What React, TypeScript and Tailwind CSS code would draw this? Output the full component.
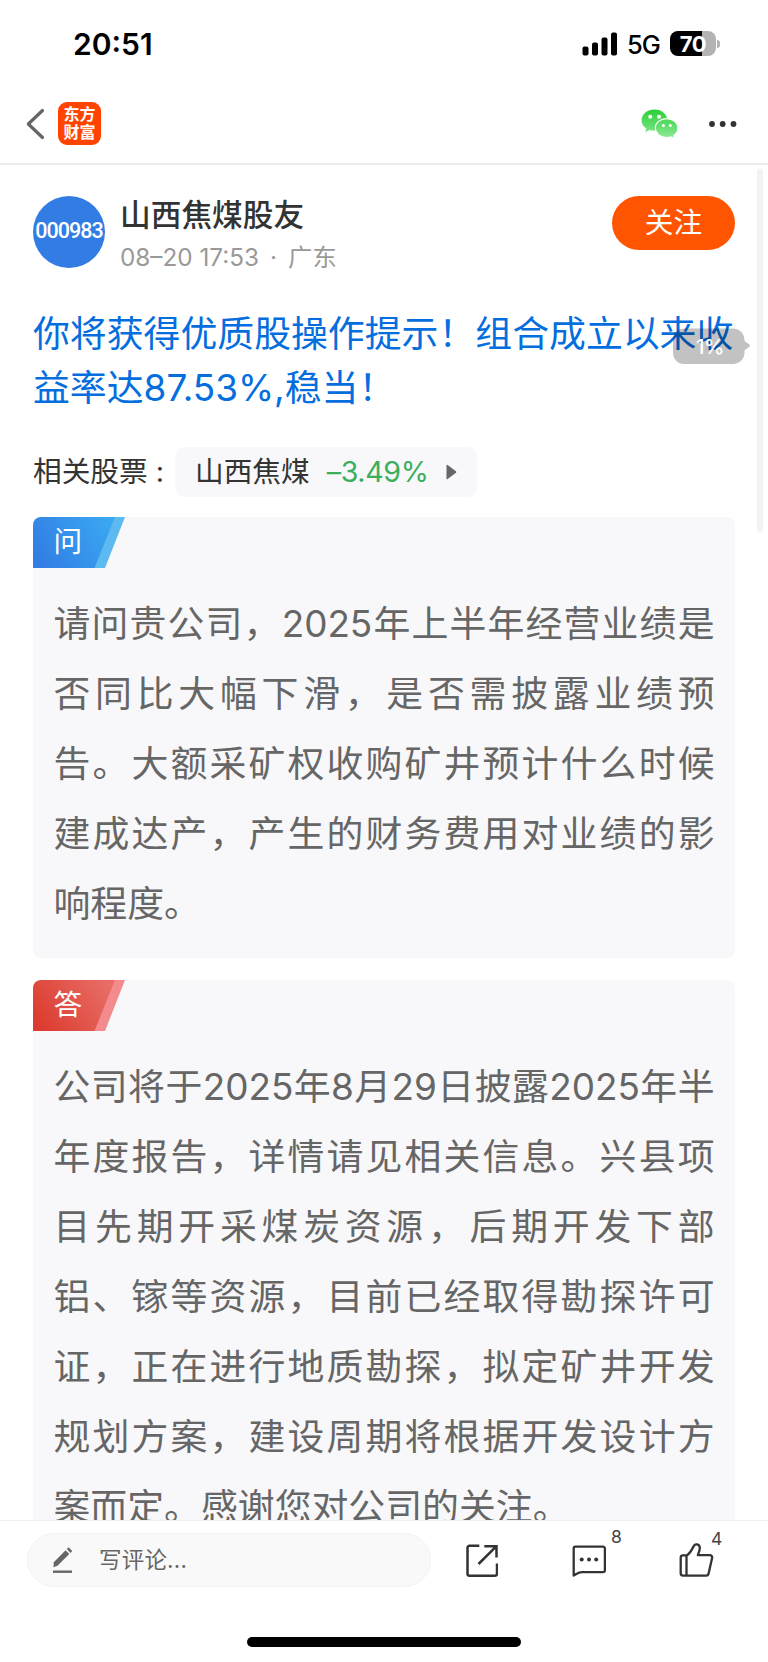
import React from 'react';

interface TextPanelProps {
  label: string;
  kind: 'question' | 'answer';
  lines: string[];
}

const QUESTION_LINES = [
  '请问贵公司，2025年上半年经营业绩是',
  '否同比大幅下滑，是否需披露业绩预',
  '告。大额采矿权收购矿井预计什么时候',
  '建成达产，产生的财务费用对业绩的影',
  '响程度。',
];

const ANSWER_LINES = [
  '公司将于2025年8月29日披露2025年半',
  '年度报告，详情请见相关信息。兴县项',
  '目先期开采煤炭资源，后期开发下部',
  '铝、镓等资源，目前已经取得勘探许可',
  '证，正在进行地质勘探，拟定矿井开发',
  '规划方案，建设周期将根据开发设计方',
  '案而定。感谢您对公司的关注。',
];

const StatusBar = () => (
  <div className="flex h-[84px] shrink-0 items-center justify-between pl-[73px] pr-[48px] pt-[3px]">
    <span className="text-[30px] font-semibold leading-none text-black">20:51</span>
    <div className="flex items-center">
      <svg width="36" height="24" viewBox="0 0 36 24" fill="#000">
        <rect x="0.5" y="14.5" width="6" height="9" rx="2" />
        <rect x="10" y="10.5" width="6" height="13" rx="2" />
        <rect x="19.5" y="5.5" width="6" height="18" rx="2" />
        <rect x="29" y="0.5" width="6" height="23" rx="2" />
      </svg>
      <span className="ml-[9px] w-[33px] pt-[2px] text-[25.5px] font-[450] leading-none tracking-[-1px] text-black">5G</span>
      <div className="ml-[10px] flex items-center">
        <div className="flex h-[25px] w-[46px] items-center justify-center rounded-[8px] bg-[linear-gradient(90deg,#000_70%,#b3b3b3_70%)]">
          <span className="text-[22px] font-bold leading-none tracking-[-0.5px] text-white">70</span>
        </div>
        <div className="ml-px h-[8px] w-[3px] rounded-r-full bg-[#b3b3b3]" />
      </div>
    </div>
  </div>
);

const Header = () => (
  <header className="flex h-[81px] shrink-0 items-center border-b-2 border-[#ebebeb] pl-[26px] pr-[31px]">
    <svg width="19" height="32" viewBox="0 0 19 32" fill="none" stroke="#666" strokeWidth="3.2" strokeLinecap="round" strokeLinejoin="round">
      <path d="M16.5 2.5 2.3 16l14.2 13.5" />
    </svg>
    <div className="ml-[13px] flex h-[43px] w-[43px] flex-col items-center justify-center rounded-[9px] bg-[#ff4400] text-[16px] font-bold leading-[17.5px] text-white">
      <span>东方</span>
      <span>财富</span>
    </div>
    <svg className="ml-auto" width="38" height="30" viewBox="0 0 38 30">
      <defs>
        <linearGradient id="wechat" x1="0" y1="0" x2="0" y2="30" gradientUnits="userSpaceOnUse">
          <stop offset="0" stopColor="#28cf36" />
          <stop offset="1" stopColor="#91ea99" />
        </linearGradient>
      </defs>
      <path fill="url(#wechat)" d="M13.5.6C6.300.6.6 5.300.6 11.300c0 3.400 1.800 6.300 4.700 8.300L4.200 23.200l4.300-2.200c1.600.5 3.300.8 5 .8 7.200 0 12.900-4.800 12.900-10.600S20.700.6 13.500.6Z" />
      <path fill="url(#wechat)" stroke="#fff" strokeWidth="1.1" d="M25.600 9.600c-6.300 0-11.300 4.200-11.300 9.500s5 9.400 11.300 9.400c1.500 0 2.900-.2 4.200-.6l3.900 1.700-1-3c2.600-1.700 4.200-4.400 4.200-7.500 0-5.300-5-9.500-11.300-9.500Z" />
      <circle cx="9.2" cy="7.8" r="2" fill="#fff" />
      <circle cx="18" cy="7.8" r="2" fill="#fff" />
      <circle cx="22.4" cy="16.4" r="1.5" fill="#fff" />
      <circle cx="29.3" cy="16.4" r="1.5" fill="#fff" />
    </svg>
    <svg className="ml-[29px]" width="29" height="8" viewBox="0 0 29 8" fill="#333">
      <circle cx="4" cy="4" r="2.9" />
      <circle cx="14.7" cy="4" r="2.9" />
      <circle cx="25.5" cy="4" r="2.9" />
    </svg>
  </header>
);

const TextPanel = ({ label, kind, lines }: TextPanelProps) => {
  const isQuestion = kind === 'question';
  return (
    <section className="relative rounded-[8px] bg-[#f8f8fa] px-[20.5px] pb-[19px] pt-[72px]">
      <div className="absolute left-0 top-0 h-[51px] w-[92px]">
        <svg width="92" height="51" viewBox="0 0 92 51">
          <defs>
            <linearGradient id={kind} x1="0" y1="0.7" x2="1" y2="0.3">
              <stop offset="0" stopColor={isQuestion ? '#327de4' : '#dc3c2f'} />
              <stop offset="1" stopColor={isQuestion ? '#3aa7f1' : '#e86d66'} />
            </linearGradient>
          </defs>
          <path d="M60 0h32L72 51H52Z" fill={isQuestion ? '#5cbaf0' : '#f38a8b'} />
          <path d="M8 0h74L61.500 51H0V8a8 8 0 0 1 8-8Z" fill={`url(#${kind})`} />
        </svg>
        <span className="absolute left-[20.5px] top-[11px] text-[28.7px] font-normal leading-[28px] text-white">{label}</span>
      </div>
      {lines.map((line, i) => (
        <p
          key={line}
          className={`h-[70px] whitespace-nowrap text-[36.86px] leading-[70px] text-[#666] ${
            i < lines.length - 1 ? '[text-align-last:justify]' : ''
          }`}
        >
          {line}
        </p>
      ))}
    </section>
  );
};

const BottomBar = () => (
  <footer className="flex h-[142px] shrink-0 flex-col items-center border-t border-[#f0f0f0] bg-white">
    <div className="flex w-full items-center pl-[27px] pt-[12px]">
      <div className="flex h-[54px] w-[404px] items-center rounded-full border border-[#f2f2f2] bg-[#f9f9f9] pl-[25px]">
        <svg width="20" height="27" viewBox="0 0 20 27" fill="#666">
          <path d="M.8 15.300 12.600 3.300l3.700 3.700L4.500 18.700.5 20.200Z" />
          <path d="m13.800 2.100 1.900-1.900 3.500 3.900-1.700 1.800Z" />
          <path d="M0 23.500h19v2.400H0Z" />
        </svg>
        <span className="ml-[26px] text-[22.5px] leading-none tracking-[0.2px] text-[#666]">写评论...</span>
      </div>
      <svg className="ml-[35px]" width="32" height="33" viewBox="0 0 32 33" fill="none" stroke="#333" strokeWidth="2.5">
        <path d="M13.300 1.700H3.500a2 2 0 0 0-2 2v26a2 2 0 0 0 2 2h25.500a2 2 0 0 0 2-2V19.500" />
        <path d="M18.300 2.200h12.200v11.400M30 2.600 12.500 20" />
      </svg>
      <div className="relative ml-[74px]">
        <svg width="34" height="33" viewBox="0 0 34 33" fill="none" stroke="#333" strokeWidth="2.3" strokeLinejoin="round">
          <path d="M3.300 2.700h27.600a2 2 0 0 1 2 2v21.500a2 2 0 0 1-2 2H10c-3.500 0-5.200 1.700-8.300 3.300V4.500a1.800 1.800 0 0 1 1.600-1.800Z" />
          <g fill="#333" stroke="none">
            <circle cx="9.7" cy="15.5" r="2" />
            <circle cx="17" cy="15.5" r="2" />
            <circle cx="24.2" cy="15.5" r="2" />
          </g>
        </svg>
        <span className="absolute left-[39px] top-[-16px] text-[17.5px] font-normal leading-[18px] text-[#444]">8</span>
      </div>
      <div className="relative ml-[73px]">
        <svg width="35" height="34" viewBox="0 0 35 34" fill="none" stroke="#333" strokeWidth="2.3" strokeLinejoin="round">
          <path d="M8 12.300H4a2.300 2.300 0 0 0-2.300 2.300v15.700A2.300 2.300 0 0 0 4 32.600h23.300a2.300 2.300 0 0 0 2.200-1.700l3.600-16a2.200 2.200 0 0 0-2.200-2.700H18.800c1.200-3.100 2.300-5.500 2-7.600-.5-3.900-4.700-4.200-6.100-1.500C12.900 6.700 10.900 10.500 8 12.300ZM7.500 12.300v20.300" />
        </svg>
        <span className="absolute left-[32px] top-[-13px] text-[17.5px] font-normal leading-[18px] text-[#444]">4</span>
      </div>
    </div>
    <div className="mt-[50px] h-[10px] w-[274px] rounded-full bg-black" />
  </footer>
);

export default function App() {
  return (
    <div className="relative flex h-[1662px] w-[768px] flex-col overflow-hidden bg-white font-[Inter,'Noto_Sans_CJK_SC',sans-serif] font-[390]">
      <StatusBar />
      <Header />

      <main className="min-h-0 flex-1 overflow-hidden px-[33px] pt-[31px]">
        <div className="flex h-[72px] items-start">
          <div className="flex h-[72px] w-[72px] items-center justify-center rounded-full bg-[#327de4] pb-px font-[Roboto,sans-serif] text-[21.5px] font-medium tracking-[-1px] text-white">
            000983
          </div>
          <div className="ml-[15px] flex flex-col">
            <span className="text-[30.7px] font-medium leading-[38px] text-[#333]">山西焦煤股友</span>
            <span className="mt-[7px] flex text-[24.3px] leading-[32px] text-[#999]">
              08–20 17:53<span className="w-[29px] text-center">·</span>广东
            </span>
          </div>
          <button className="ml-auto h-[54px] w-[123px] rounded-full bg-[#ff5500] pt-px text-[28.7px] font-normal leading-none text-white">
            关注
          </button>
        </div>

        <h1 className="mt-[39px] whitespace-nowrap text-[36.86px] font-normal leading-[54px] text-[#056ede]">
          你将获得优质股操作提示！组合成立以来收
          <br />
          益率达87.53%,稳当！
        </h1>

        <div className="mt-[32px] flex h-[50px] items-center text-[28.7px] leading-none text-[#333]">
          <span className="w-[142px] whitespace-nowrap">相关股票 :</span>
          <div className="flex h-[50px] w-[302px] items-center rounded-[9px] bg-[#f8f8fa] pl-[20px]">
            <span>山西焦煤</span>
            <span className="ml-[17px] w-[103px] tracking-[-0.4px] text-[#3caf5c]">–3.49%</span>
            <svg className="ml-[16px]" width="11" height="16" viewBox="0 0 11 16" fill="#666">
              <path d="M.5 1.500Q.5.200 1.600.900L10 7.300q.7.700 0 1.400L1.600 15.100q-1.100.7-1.100-.6Z" />
            </svg>
          </div>
        </div>

        <div className="mt-[20px] flex flex-col gap-[22px]">
          <TextPanel label="问" kind="question" lines={QUESTION_LINES} />
          <TextPanel label="答" kind="answer" lines={ANSWER_LINES} />
        </div>
      </main>

      <BottomBar />

      {/* Scroll track and progress bubble */}
      <div className="absolute left-[757px] top-[169px] h-[363px] w-[6px] rounded-full bg-[#f2f2f2]" />
      <div className="absolute left-[673px] top-[328px] flex h-[36px] w-[77px] items-center">
        <svg className="absolute left-0 top-0" width="77" height="36" viewBox="0 0 77 36" fill="#000" fillOpacity="0.24">
          <path d="M11 .5h50a11 11 0 0 1 10.500 11v1.500l5 3.500q1 1 0 2l-5 4v2.500A11 11 0 0 1 61 36H11A11 11 0 0 1 0 25V11.500A11 11 0 0 1 11 .5Z" />
        </svg>
        <span className="relative ml-[23px] pt-[2px] text-[20.5px] font-medium leading-none tracking-[-0.5px] text-white">1%</span>
      </div>
    </div>
  );
}
